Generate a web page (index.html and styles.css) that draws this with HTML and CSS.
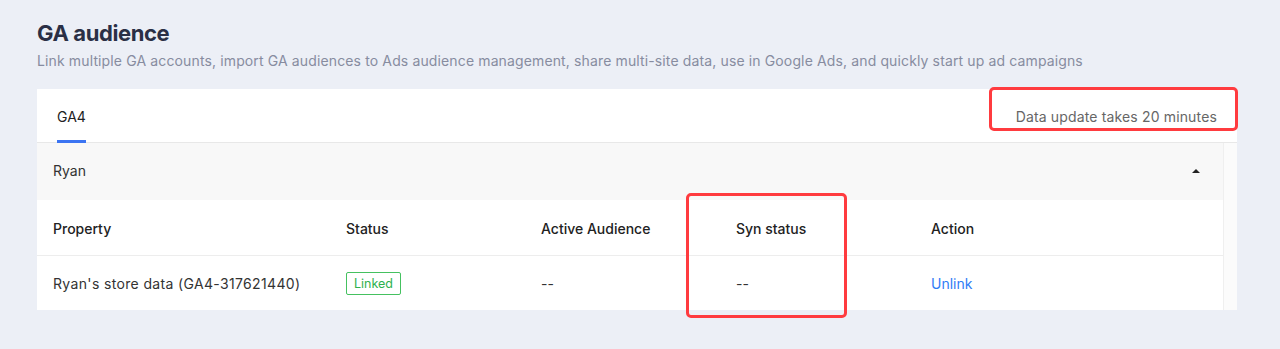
FILE: index.html
```html
<!DOCTYPE html>
<html lang="en">
<head>
  <meta charset="UTF-8" />
  <title>GA audience</title>
  <link rel="stylesheet" href="styles.css">
</head>
<body>
  <div class="page">
    <h1 class="title">GA audience</h1>
    <p class="sub-title">Link multiple GA accounts, import GA audiences to Ads audience management, share multi-site data, use in Google Ads, and quickly start up ad campaigns</p>

    <div class="card">
      <!-- tabs -->
      <div class="tabs">
        <div class="tab active">GA4</div>
        <div class="tab-extra">Data update takes 20 minutes</div>
        <span class="mark mark-update"></span>
      </div>

      <div class="panel-wrap">
        <div class="panel">
          <div class="panel-head">
            <span>Ryan</span>
            <span class="caret"></span>
          </div>

          <table class="list">
            <thead>
              <tr>
                <th class="col-prop">Property</th>
                <th class="col-mid">Status</th>
                <th class="col-mid">Active Audience</th>
                <th class="col-mid">Syn status</th>
                <th>Action</th>
              </tr>
            </thead>
            <tbody>
              <tr>
                <td class="prop-name">Ryan's store data (GA4-317621440)</td>
                <td><span class="tag">Linked</span></td>
                <td>--</td>
                <td>--</td>
                <td><a href="#" class="link">Unlink</a></td>
              </tr>
            </tbody>
          </table>
          <span class="mark mark-syn"></span>
        </div>
        <div class="scroll-track"></div>
      </div>
    </div>
  </div>
</body>
</html>
```

FILE: styles.css
```css
html, body {
  min-height: 100%;
}

body {
  margin: 0;
  padding: 0;
  background: #eceff6;
  font-family: 'Inter', 'Roboto', sans-serif;
  color: #333;
}

.page {
  padding: 19px 43px 40px 37px;
}

.title {
  margin: 0;
  font-size: 22px;
  font-weight: 700;
  line-height: 28px;
  color: #2a2f45;
  letter-spacing: -0.4px;
}

.sub-title {
  margin: 4px 0 0;
  font-size: 14px;
  line-height: 20px;
  color: #878ca0;
  letter-spacing: 0.13px;
}

.card {
  margin-top: 18px;
  background: #fff;
  position: relative;
}

.tabs {
  position: relative;
  height: 53px;
  border-bottom: 1px solid #e8e8e8;
  display: flex;
  justify-content: space-between;
  align-items: flex-start;
  padding: 0 20px;
}

.tab {
  margin-top: 18px;
  font-size: 14px;
  line-height: 20px;
  color: #222;
  box-sizing: border-box;
}

.tab.active {
  border-bottom: 3px solid #3b74f2;
  margin-bottom: -1px;
  height: 36px;
}

.tab-extra {
  margin-top: 18px;
  font-size: 14px;
  line-height: 20px;
  color: #666;
  letter-spacing: 0.15px;
}

.panel-wrap {
  display: flex;
}

.panel {
  flex: 1;
  position: relative;
}

.scroll-track {
  width: 13px;
  border-left: 1px solid #efefef;
  background: #fbfbfb;
}

.panel-head {
  height: 57px;
  background: #f8f8f8;
  display: flex;
  justify-content: space-between;
  align-items: center;
  padding: 0 20px 2px 16px;
  box-sizing: border-box;
  font-size: 14px;
  color: #333;
}

.caret {
  width: 0;
  height: 0;
  border-left: 4px solid transparent;
  border-right: 4px solid transparent;
  border-bottom: 4px solid #222;
  margin-right: 3px;
}

.list {
  width: 100%;
  border-collapse: collapse;
  font-size: 14px;
}

.list th,
.list td {
  text-align: left;
  padding: 2px 16px 0;
  height: 55px;
  box-sizing: border-box;
}

.list th {
  font-weight: 500;
  color: #222;
  border-bottom: 1px solid #ededed;
}

.list td {
  color: #333;
}

.prop-name {
  letter-spacing: 0.35px;
}

.col-prop {
  width: 293px;
}

.col-mid {
  width: 195px;
}

.tag {
  display: inline-block;
  padding: 0 7px;
  height: 23px;
  line-height: 21px;
  font-size: 12.5px;
  color: #2fb14e;
  border: 1px solid #45c160;
  border-radius: 2px;
  box-sizing: border-box;
}

.link {
  color: #2f7cf6;
  text-decoration: none;
}

.mark {
  position: absolute;
  border: 3px solid #ff3b3f;
  border-radius: 5px;
  pointer-events: none;
}

.mark-update {
  top: -2px;
  right: -1px;
  width: 243px;
  height: 38px;
}

.mark-syn {
  top: 50px;
  left: 649px;
  width: 155px;
  height: 119px;
}
```
